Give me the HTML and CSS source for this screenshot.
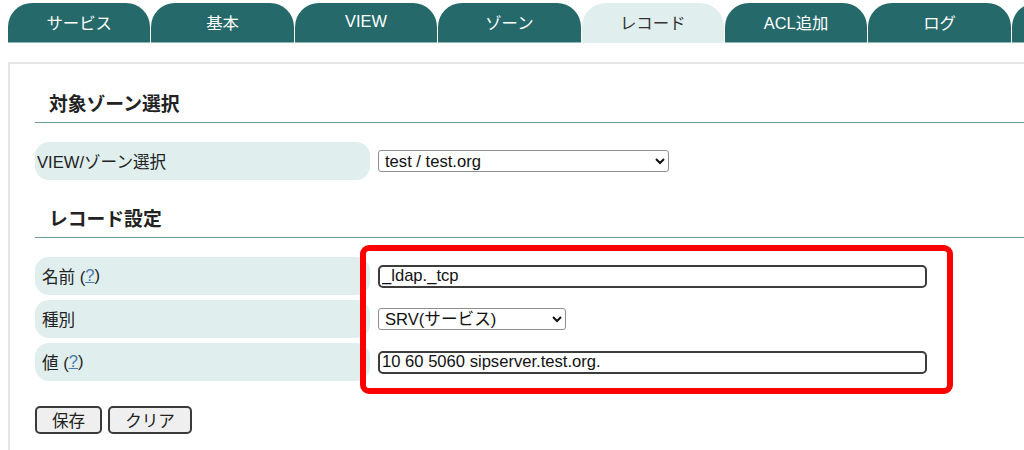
FILE: index.html
```html
<!DOCTYPE html>
<html lang="ja">
<head>
<meta charset="utf-8">
<title>レコード</title>
<link rel="stylesheet" href="styles.css">
</head>
<body>
<nav class="tabs">
  <a class="tab">サービス</a>
  <a class="tab">基本</a>
  <a class="tab">VIEW</a>
  <a class="tab">ゾーン</a>
  <a class="tab active">レコード</a>
  <a class="tab">ACL追加</a>
  <a class="tab">ログ</a>
  <a class="tab"></a>
</nav>
<main class="panel">
  <h2 class="heading heading-first">対象ゾーン選択</h2>
  <div class="rows">
    <div class="row">
      <div class="label label-tight">VIEW/ゾーン選択</div>
      <div class="field">
        <select class="select select-zone">
          <option>test / test.org</option>
        </select>
      </div>
    </div>
  </div>
  <h2 class="heading">レコード設定</h2>
  <div class="rows rows-record">
    <div class="row">
      <div class="label">名前 (<a class="help">?</a>)</div>
      <div class="field"><input class="text" type="text" value="_ldap._tcp"></div>
    </div>
    <div class="row">
      <div class="label">種別</div>
      <div class="field">
        <select class="select select-type">
          <option>SRV(サービス)</option>
        </select>
      </div>
    </div>
    <div class="row">
      <div class="label">値 (<a class="help">?</a>)</div>
      <div class="field"><input class="text" type="text" value="10 60 5060 sipserver.test.org."></div>
    </div>
    <div class="highlight"></div>
  </div>
  <div class="buttons">
    <button class="btn" type="button">保存</button>
    <button class="btn" type="button">クリア</button>
  </div>
</main>
</body>
</html>
```
FILE: styles.css
```css
html, body {
  overflow: hidden;
}
body {
  margin: 3px 0 0 8px;
  background: #ffffff;
  font-family: "Liberation Sans", Arial, "Noto Sans CJK JP", sans-serif;
  font-size: 16.6px;
  color: #222222;
}
.tabs {
  display: flex;
  gap: 1px;
  width: 1200px;
}
.tab {
  flex: 0 0 142.4px;
  height: 40px;
  box-sizing: border-box;
  background: #25696a;
  color: #ffffff;
  border-radius: 24px 24px 0 0;
  display: flex;
  justify-content: center;
  align-items: center;
  padding-bottom: 2px;
  font-size: 16.4px;
  text-decoration: none;
  border-bottom: 1px solid #8fb5b5;
}
.tab.active {
  background: #e0eeee;
  color: #333333;
  border-bottom-color: #e0eeee;
}
.panel {
  margin-top: 19px;
  border-top: 2px solid #e6e6e6;
  border-left: 2px solid #e6e6e6;
  padding: 0 0 20px 25px;
}
.heading {
  margin: 28px 0 0 0;
  padding: 0 0 5px 14px;
  font-size: 18.8px;
  line-height: 24px;
  font-weight: bold;
  color: #222222;
  border-bottom: 1px solid #6f9c9c;
}
.heading-first {
  margin-top: 29px;
}
.rows {
  margin-top: 19px;
  display: flex;
  flex-direction: column;
  gap: 5px;
}
.rows-record {
  position: relative;
}
.row {
  display: flex;
  align-items: center;
  gap: 8px;
  height: 38px;
}
.label {
  flex: 0 0 335px;
  height: 38px;
  box-sizing: border-box;
  background: #e0eeee;
  border-radius: 14px;
  display: flex;
  align-items: center;
  padding-left: 7px;
  color: #222222;
}
.label-tight {
  padding-left: 2px;
}
.help {
  color: #4a79ad;
  text-decoration: underline;
}
.field {
  display: flex;
  align-items: center;
}
.text {
  width: 549px;
  height: 23px;
  box-sizing: border-box;
  border: 2px solid #3c3c3c;
  border-radius: 5px;
  padding: 0 2px;
  font-family: "Liberation Sans", Arial, "Noto Sans CJK JP", sans-serif;
  font-size: 16.6px;
  color: #111111;
  background: #ffffff;
}
.select {
  height: 22px;
  box-sizing: border-box;
  border: 1px solid #8f8f8f;
  border-radius: 3px;
  background: #ffffff;
  font-family: "Liberation Sans", Arial, "Noto Sans CJK JP", sans-serif;
  font-size: 16.6px;
  color: #111111;
  padding: 0 0 0 2px;
}
.select-zone {
  width: 291px;
}
.select-type {
  width: 188px;
}
.highlight {
  position: absolute;
  left: 325px;
  top: -12px;
  width: 593px;
  height: 149px;
  box-sizing: border-box;
  border: 6px solid #ff0000;
  border-radius: 9px;
  pointer-events: none;
}
.buttons {
  margin-top: 25px;
  display: flex;
  gap: 6px;
}
.btn {
  height: 28px;
  box-sizing: border-box;
  padding: 0 15px;
  border: 2px solid #3a3a3a;
  border-radius: 5px;
  background: #efefef;
  font-family: "Liberation Sans", Arial, "Noto Sans CJK JP", sans-serif;
  font-size: 16.6px;
  color: #222222;
}
```
